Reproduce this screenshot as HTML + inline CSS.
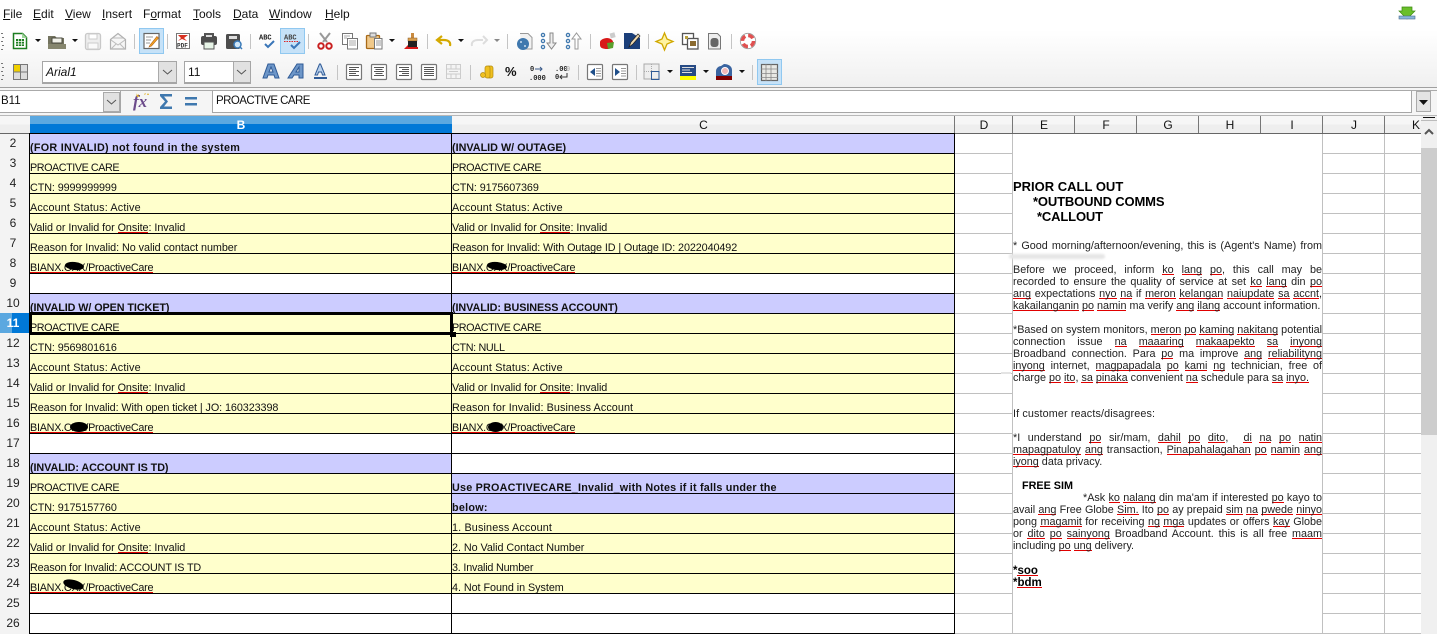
<!DOCTYPE html>
<html><head><meta charset="utf-8"><style>
html,body{margin:0;padding:0;width:1437px;height:634px;overflow:hidden;background:#fff;font-family:"Liberation Sans",sans-serif;color:#000}
.a{position:absolute}
#tb{left:0;top:0;width:1437px;height:87px;background:linear-gradient(#fff 0,#fff 30px,#f0f0f0 87px)}
.m{position:absolute;top:7px;font-size:12px;line-height:15px;color:#111}
.m u{text-underline-offset:1px}
.cb{position:absolute;background:#fff;border:1px solid #a6a6a6;box-sizing:border-box;font-size:12px;color:#111}
.h{position:absolute;top:116px;height:17px;line-height:18px;text-align:center;font-size:12px;border-right:1px solid #777;box-sizing:border-box;color:#111;padding-left:1px}
.r{position:absolute;left:0;width:26px;height:20px;line-height:19px;text-align:center;font-size:12px;color:#222}
table{position:absolute;left:29px;top:133px;border-collapse:collapse;table-layout:fixed;width:925px}
td{height:20px;padding:10px 0 0 0;border:1px solid #000;font-size:10.8px;line-height:9px;vertical-align:top;white-space:nowrap;color:#111;box-sizing:border-box;letter-spacing:-.05px}
tr{height:20px}
.l{background:#ccf;font-weight:bold}
.y{background:#ffc}
.w{background:#fff}
.s,.t u{text-decoration:none;background:linear-gradient(#e00000,#e00000) no-repeat 0 calc(100% - 1px)/100% 1px}
.t{position:absolute;left:1013px;width:309px;font-size:10.8px;line-height:12px;color:#222;white-space:normal;text-align:justify;text-align-last:justify}
.n{text-align-last:left}
.b{font-weight:bold;font-size:13px;line-height:15px;color:#000;text-align-last:left;white-space:pre}
.blob{position:absolute;background:#000;border-radius:50%}
</style></head><body>
<div class="a" id="tb"></div>
<span class="m" style="left:3px"><u>F</u>ile</span>
<span class="m" style="left:33px"><u>E</u>dit</span>
<span class="m" style="left:65px"><u>V</u>iew</span>
<span class="m" style="left:102px"><u>I</u>nsert</span>
<span class="m" style="left:143px">F<u>o</u>rmat</span>
<span class="m" style="left:193px"><u>T</u>ools</span>
<span class="m" style="left:233px"><u>D</u>ata</span>
<span class="m" style="left:269px"><u>W</u>indow</span>
<span class="m" style="left:325px"><u>H</u>elp</span>

<svg class="a" style="left:0;top:0" width="1437" height="87" viewBox="0 0 1437 87">
<rect x="139.500" y="28.500" width="24" height="25" fill="#c6e2f8" stroke="#90c8f0"/>
<rect x="280.500" y="28.500" width="24" height="25" fill="#c6e2f8" stroke="#90c8f0"/>
<rect x="757.500" y="59.500" width="24" height="25" fill="#c6e2f8" stroke="#90c8f0"/>
<g fill="#777"><rect x="1" y="33" width="2" height="1"/><rect x="2" y="37" width="2" height="1"/><rect x="1" y="41" width="2" height="1"/><rect x="2" y="45" width="2" height="1"/><rect x="1" y="49" width="2" height="1"/><rect x="1" y="63" width="2" height="1"/><rect x="2" y="67" width="2" height="1"/><rect x="1" y="71" width="2" height="1"/><rect x="2" y="75" width="2" height="1"/><rect x="1" y="79" width="2" height="1"/></g>
<g fill="#c4c4c4"><rect x="134" y="34" width="1" height="15"/><rect x="167" y="34" width="1" height="15"/><rect x="250" y="34" width="1" height="15"/><rect x="308" y="34" width="1" height="15"/><rect x="427" y="34" width="1" height="15"/><rect x="507" y="34" width="1" height="15"/><rect x="590" y="34" width="1" height="15"/><rect x="648" y="34" width="1" height="15"/><rect x="731" y="34" width="1" height="15"/>
<rect x="337" y="65" width="1" height="15"/><rect x="470" y="65" width="1" height="15"/><rect x="578" y="65" width="1" height="15"/><rect x="636" y="65" width="1" height="15"/><rect x="752" y="65" width="1" height="15"/></g>
<g fill="#111"><path d="M35 39h6l-3 3zM72 39h6l-3 3zM389 39h6l-3 3zM458 39h6l-3 3zM667 70h6l-3 3zM703 70h6l-3 3zM739 70h6l-3 3z"/></g>
<path d="M494 39h6l-3 3z" fill="#888"/>
<path d="M13.500 33.500h9l4 4v11h-13z" fill="#fff" stroke="#1c7d20" stroke-width="1.500"/><path d="M22 33l5 5h-5z" fill="#9ed49a"/><path d="M16 39h8v7h-8z" fill="#1c7d20"/><path d="M18.500 39v7M21.500 39v7M16 41.500h8M16 44h8" stroke="#fff" stroke-width=".7"/>
<path d="M48 36h7l2 2h7v11H48z" fill="#73735f"/><path d="M52 38h10v5H52z" fill="#f2f2ea" stroke="#4a4a3e"/><path d="M48 44h18v5H48z" fill="#86866e"/>
<rect x="85.500" y="33.500" width="15" height="16" rx="2" fill="#eee" stroke="#c8c8c8" stroke-width="1.300"/><rect x="89" y="34" width="8" height="5" fill="#fff" stroke="#ccc"/><rect x="88" y="43" width="10" height="6" fill="#fafafa" stroke="#ccc"/>
<path d="M110.500 39.500l7.500-6 7.500 6v9.500h-15z" fill="#f6f6f6" stroke="#b0b0b0" stroke-width="1.200"/><path d="M111 40l7 5 7-5M111 49l5-5M125 49l-5-5M113 38h10" fill="none" stroke="#bcbcbc"/>
<rect x="144" y="33.500" width="15" height="15" fill="#fff" stroke="#666" stroke-width="1.200"/><path d="M146 37h7M146 40h5M146 43h4" stroke="#999"/><path d="M150 45l-1 2 2.500-1 7-8-1.600-1.500z" fill="#f5a623" stroke="#b5651d" stroke-width=".6"/>
<rect x="176.500" y="33.500" width="13" height="15" fill="#fff" stroke="#777"/><path d="M178 35h10l-4 3 3 3-5-2-4 2 3-3z" fill="#d83020"/><text x="177" y="47.500" font-size="6" font-weight="bold" font-family="Liberation Mono" fill="#333">PDF</text>
<rect x="204" y="33" width="10" height="4" fill="#555"/><rect x="201" y="36" width="16" height="9" rx="2" fill="#4d4d4d"/><rect x="204" y="42" width="10" height="7" fill="#e8f5e8" stroke="#555"/><rect x="206" y="35" width="6" height="2" fill="#ddd"/>
<rect x="226" y="34" width="14" height="15" rx="1.500" fill="#4d4d4d"/><rect x="229" y="36" width="8" height="3" fill="#ddd"/><circle cx="237.500" cy="44.500" r="3.500" fill="#cfe6f8" stroke="#3a7ab8" stroke-width="1.500"/><path d="M240 47l2 2" stroke="#3a7ab8" stroke-width="1.500"/>
<text x="259" y="39.500" font-size="7" font-weight="bold" font-family="Liberation Mono" fill="#222">ABC</text><path d="M265 44l3 3 6-6" fill="none" stroke="#3a76b8" stroke-width="2"/>
<text x="284" y="39.500" font-size="7" font-weight="bold" font-family="Liberation Mono" fill="#444">ABC</text><path d="M284 41.500h14" stroke="#e02020" stroke-dasharray="1.500 1"/><path d="M291 45l3 3 6-6" fill="none" stroke="#3a76b8" stroke-width="2"/>
<path d="M320 33l7 9M330 33l-7 9" stroke="#999" stroke-width="2"/><circle cx="321" cy="46" r="2.700" fill="#fff" stroke="#c81e1e" stroke-width="2"/><circle cx="329" cy="46" r="2.700" fill="#fff" stroke="#c81e1e" stroke-width="2"/>
<rect x="342.500" y="33.500" width="10" height="11" fill="#fff" stroke="#777"/><rect x="347.500" y="38.500" width="10" height="10.500" fill="#fff" stroke="#777"/><path d="M344 36h6M344 38h3M349 41h7M349 43h7M349 45h7" stroke="#aaa"/>
<rect x="366.500" y="35.500" width="13" height="13" rx="1" fill="#f0c98a" stroke="#a86a18" stroke-width="1.300"/><rect x="370" y="33" width="6" height="4" fill="#ddd" stroke="#777"/><rect x="374.500" y="38.500" width="7.500" height="10.500" fill="#fff" stroke="#777"/><path d="M376 41h5M376 43h5M376 45h5" stroke="#999"/>
<rect x="411" y="33" width="3" height="5" fill="#c88a40"/><rect x="408" y="38" width="9" height="3" fill="#d9a050" stroke="#8a5a20" stroke-width=".5"/><rect x="408" y="41" width="9" height="7" fill="#222"/><path d="M404 49l4-4v4z" fill="#d81818"/><rect x="407" y="47" width="11" height="2" fill="#d81818"/>
<path d="M450 46c1-4-2-6-6-6h-5m3-4l-5 4 5 4" fill="none" stroke="#d4a900" stroke-width="2.200"/>
<path d="M472 46c-1-4 2-6 6-6h5" fill="none" stroke="#ddd" stroke-width="2"/><path d="M483 36l4 4-4 4" fill="none" stroke="#ddd" stroke-width="2"/>
<path d="M520 33.500h8l4 4v11.500h-10" fill="#f2f2f2" stroke="#999"/><circle cx="523" cy="44" r="6" fill="#3f78ae"/><circle cx="521" cy="42" r="1" fill="#cde"/><circle cx="525" cy="46" r="1" fill="#cde"/>
<g fill="none" stroke="#3f78ae" stroke-width="1.300"><circle cx="543" cy="35" r="1.600"/><circle cx="543" cy="41" r="1.600"/><circle cx="543" cy="47" r="1.600"/><circle cx="568" cy="35" r="1.600"/><circle cx="568" cy="41" r="1.600"/><circle cx="568" cy="47" r="1.600"/></g>
<path d="M550 33v10h-3l4.500 6 4.500-6h-3V33z" fill="#eee" stroke="#888"/><path d="M575 49V39h-3l4.500-6 4.500 6h-3v10z" fill="#fff" stroke="#999"/>
<path d="M600 42c0-2 4-4 7-4 3 0 6 2 6 4v3c0 3-3 4-6 4-4 0-7-1-7-4z" fill="#d81818"/><path d="M607 43l7-1-1 6-5 1z" fill="#5aa02c"/><rect x="610" y="33" width="5" height="5" fill="#ccc" transform="rotate(-15 612 35)"/>
<rect x="624" y="33" width="16" height="16" fill="#1b3f7a"/><path d="M632 33h8v5z" fill="#f2f2f2"/><path d="M629 47l2-5 7-8 2 2-7 8z" fill="#eed9b0" stroke="#222" stroke-width=".7"/>
<path d="M664.500 33l2.500 6 6 2.500-6 2.500-2.500 6-2.500-6-6-2.500 6-2.500z" fill="#fff3a0" stroke="#d0a800" stroke-width="1.300"/>
<rect x="682.500" y="33.500" width="11" height="11" fill="#fff" stroke="#555" stroke-width="1.300"/><rect x="687.500" y="38.500" width="10.500" height="10.500" fill="#fff" stroke="#555" stroke-width="1.300"/><rect x="690" y="41" width="6" height="5" fill="#8a6a30"/><rect x="685" y="36" width="3" height="3" fill="#b8a040"/>
<path d="M708.500 33.500h9l3 3v12.500h-12z" fill="#eee" stroke="#777"/><rect x="710.500" y="38" width="8" height="9" rx="3" fill="#666"/>
<circle cx="748" cy="41" r="7.700" fill="#fff" stroke="#999" stroke-width=".8"/><circle cx="748" cy="41" r="5.500" fill="none" stroke="#e05050" stroke-width="3.500" stroke-dasharray="5.640 3"/><circle cx="748" cy="41" r="3" fill="#fff"/>
<rect x="13.500" y="64.500" width="14" height="15" fill="#ddd" stroke="#777"/><rect x="14" y="65" width="7" height="7" fill="#f0d000"/><path d="M20.500 64v15M13 72h15" stroke="#777"/>
<g fill="#6d96c8" stroke="#2f5a96" stroke-width="1"><path fill-rule="evenodd" d="M268 64h6l5 14h-4l-1-3h-6l-1 3h-4zM271 67l-2 5h4z"/><path fill-rule="evenodd" d="M297 64h6v14h-4v-3h-5l-2 3h-4zM299 67l-3 5h3z"/></g>
<path d="M320.500 64l4.500 11h-2.500l-1-3h-3l-1 3h-2.500l4.500-11z" fill="#b8d0ec" stroke="#2f5a96"/><rect x="314" y="77" width="13" height="2" fill="#2f5a96"/>
<g fill="#fff" stroke="#777" stroke-width="1.200"><rect x="346.500" y="64.500" width="15" height="15" rx="1"/><rect x="371.500" y="64.500" width="15" height="15" rx="1"/><rect x="396.500" y="64.500" width="15" height="15" rx="1"/><rect x="421.500" y="64.500" width="15" height="15" rx="1"/></g>
<g stroke="#555"><path d="M349 67.500h10M349 69.500h7M349 71.500h10M349 73.500h7M349 75.500h10M374 67.500h10M375.500 69.500h7M374 71.500h10M375.500 73.500h7M374 75.500h10M399 67.500h10M402 69.500h7M399 71.500h10M402 73.500h7M399 75.500h10M424 67.500h10M424 69.500h10M424 71.500h10M424 73.500h10M424 75.500h10"/></g>
<rect x="446.500" y="64.500" width="14" height="14" fill="#f4f4f4" stroke="#ccc"/><path d="M446 69h15M446 74h15M451 64v5M456 64v5M451 74v5M456 74v5M449 71.500h9" stroke="#ccc"/>
<g fill="#f0c020" stroke="#b08a10" stroke-width=".7"><rect x="487" y="66" width="6" height="12" rx="2"/><rect x="485" y="66" width="5" height="12" rx="2"/><circle cx="483" cy="75" r="2.500"/></g>
<text x="505" y="76" font-size="13" font-weight="bold" fill="#111">%</text>
<g font-family="Liberation Mono" font-weight="bold" font-size="7" fill="#222"><text x="530" y="71">0</text><text x="529" y="80">.000</text><text x="555" y="71">.00</text><text x="566" y="71" fill="#bbb">0</text><text x="555" y="79">0</text></g>
<path d="M535 69h7m-2-2l2 2-2 2" fill="none" stroke="#3a5a8a"/><path d="M567 73v4h-7m2-2l-2 2 2 2" fill="none" stroke="#333"/>
<rect x="587.500" y="64.500" width="15" height="15" rx="1" fill="#fff" stroke="#777" stroke-width="1.200"/><rect x="612.500" y="64.500" width="15" height="15" rx="1" fill="#fff" stroke="#777" stroke-width="1.200"/>
<path d="M595 68v8l-5-4z" fill="#1f4f8a"/><path d="M615 68v8l5-4z" fill="#1f4f8a"/><path d="M596 68.500h5M596 71h5M596 73.500h5M596 76h5M621 68.500h5M621 71h5M621 73.500h5M621 76h5" stroke="#777" stroke-width=".8"/>
<rect x="644" y="64" width="15" height="15" fill="#eee" stroke="#aaa"/><path d="M651.500 64v15M644 71.500h15" stroke="#aaa" stroke-dasharray="1 1"/><path d="M651.500 72v7.500M651 71.500h8v8h-8" fill="none" stroke="#2f5a96"/>
<rect x="680" y="65" width="16" height="11" fill="#274b85"/><path d="M682 67.500h12M682 70h8M682 72.500h10" stroke="#ddd"/><rect x="680" y="76" width="16" height="4" fill="#ff0"/>
<path d="M716 76v-5c0-3 3-5 5-5l3-2c4 0 8 2 8 6v6z" fill="#3a64a0"/><circle cx="725" cy="71" r="3.500" fill="#f0b8b8" stroke="#fff"/><rect x="716" y="76" width="16" height="4" fill="#800000"/>
<rect x="761.500" y="64.500" width="16" height="16" fill="#e8e8e4" stroke="#666" stroke-width="1.200"/><path d="M761 69h17M761 73.500h17M761 77.500h17M766 64v17M771 64v17" stroke="#888" stroke-width=".8"/>
<path d="M1402 7h10v4h3l-8 8-8-8h3z" fill="#6abf2a" stroke="#3d8a10" stroke-width=".7"/><rect x="1399" y="16" width="16" height="3" fill="#8ab6dc" stroke="#4a6a8a" stroke-width=".6"/>
</svg>

<div class="cb" style="left:42px;top:61px;width:135px;height:23px;line-height:21px;padding-left:3px;font-style:italic;border-width:1px 2px 2px 1px">Arial1</div>
<div class="a" style="left:158px;top:62px;width:17px;height:20px;background:#e1e1e1;border-left:1px solid #aaa"></div>
<div class="cb" style="left:184px;top:61px;width:67px;height:23px;line-height:21px;padding-left:3px;border-width:1px 2px 2px 1px">11</div>
<div class="a" style="left:233px;top:62px;width:16px;height:20px;background:#e1e1e1;border-left:1px solid #aaa"></div>
<svg class="a" style="left:0;top:60px" width="260" height="25"><path d="M163 10l4.500 4 4.500-4M237 10l4.500 4 4.500-4" fill="none" stroke="#555"/></svg>

<div class="a" style="left:0;top:87px;width:1437px;height:28px;background:#f5f5f5"></div>
<div class="a" style="left:0;top:87px;width:1437px;height:1px;background:#a0a0a0"></div>
<div class="a" style="left:0;top:90px;width:1437px;height:1px;background:#aaa"></div>
<div class="cb" style="left:-1px;top:91px;width:122px;height:22px;line-height:20px;padding-left:1px;border-top:0;font-size:11.500px">B11</div>
<div class="a" style="left:103px;top:92px;width:17px;height:20px;background:#e1e1e1;border:1px solid #aaa;box-sizing:border-box"></div>
<svg class="a" style="left:100px;top:92px" width="24" height="20"><path d="M7 8l4.500 4 4.500-4" fill="none" stroke="#555"/></svg>
<svg class="a" style="left:125px;top:88px" width="80" height="26" viewBox="125 88 80 26">
<text x="133" y="107" font-size="17" font-weight="bold" font-style="italic" font-family="Liberation Serif" fill="#6b4a8a">fx</text><path d="M136 93l1 2 2-1-1 2 2 1-3 0zM143 93l1 1 2-1-1 2zM148 93l-1 2 2 0z" fill="#e0b020"/>
<path d="M160 94h12v2.500h-8l4 5-4 5h8v2.500h-12v-2l5-5.500-5-5.500z" fill="#3f78ae"/>
<rect x="185" y="97" width="12" height="2.500" fill="#3f78ae"/><rect x="185" y="103" width="12" height="2.500" fill="#3f78ae"/>
</svg>
<div class="cb" style="left:212px;top:91px;width:1200px;height:22px;line-height:20px;padding-left:3px;border-top:0;font-size:11.500px;letter-spacing:-.55px">PROACTIVE CARE</div>
<div class="a" style="left:1416px;top:91px;width:15px;height:21px;background:#e4e4e4;border:1px solid #aaa;box-sizing:border-box"></div>
<svg class="a" style="left:1416px;top:91px" width="15" height="21"><path d="M3 9h9l-4.500 5z" fill="#111"/></svg>

<div class="a" style="left:0;top:115px;width:1437px;height:1px;background:#b8b8b8"></div>
<div class="a" style="left:0;top:116px;width:1437px;height:17px;background:linear-gradient(#f6f6f6 0,#f6f6f6 8px,#eee 9px)"></div>
<div class="a" style="left:0;top:133px;width:1421px;height:1px;background:#666"></div>
<div class="a" style="left:0;top:134px;width:29px;height:500px;background:#f3f3f3;border-right:1px solid #888"></div>
<div class="a" style="left:0;top:313px;width:12px;height:20px;background:#5ba8e0"></div>
<div class="a" style="left:12px;top:313px;width:18px;height:20px;background:#0078d7"></div>

<div class="a" style="left:30px;top:116px;width:422px;height:8px;background:#5ba8e0"></div>
<div class="a" style="left:30px;top:124px;width:422px;height:10px;background:#0078d7"></div>
<div class="a" style="left:30px;top:116px;width:422px;height:17px;line-height:18px;text-align:center;color:#fff;font-weight:bold;font-size:12px">B</div>
<div class="h" style="left:452px;width:503px">C</div>
<div class="h" style="left:955px;width:58px">D</div>
<div class="h" style="left:1013px;width:62px">E</div>
<div class="h" style="left:1075px;width:62px">F</div>
<div class="h" style="left:1137px;width:62px">G</div>
<div class="h" style="left:1199px;width:62px">H</div>
<div class="h" style="left:1261px;width:62px">I</div>
<div class="h" style="left:1323px;width:62px">J</div>
<div class="h" style="left:1385px;width:36px;text-align:left;padding-left:27px;border-right:0">K</div>

<div class="r" style="top:134px">2</div><div class="r" style="top:154px">3</div><div class="r" style="top:174px">4</div><div class="r" style="top:194px">5</div><div class="r" style="top:214px">6</div><div class="r" style="top:234px">7</div><div class="r" style="top:254px">8</div><div class="r" style="top:274px">9</div><div class="r" style="top:294px">10</div>
<div class="r" style="top:314px;color:#fff;font-weight:bold">11</div>
<div class="r" style="top:334px">12</div><div class="r" style="top:354px">13</div><div class="r" style="top:374px">14</div><div class="r" style="top:394px">15</div><div class="r" style="top:414px">16</div><div class="r" style="top:434px">17</div><div class="r" style="top:454px">18</div><div class="r" style="top:474px">19</div><div class="r" style="top:494px">20</div><div class="r" style="top:514px">21</div><div class="r" style="top:534px">22</div><div class="r" style="top:554px">23</div><div class="r" style="top:574px">24</div><div class="r" style="top:594px">25</div><div class="r" style="top:614px">26</div>

<div class="a" style="left:955px;top:134px;width:466px;height:500px;background:repeating-linear-gradient(#fff 0,#fff 19px,#c0c0c0 19px,#c0c0c0 20px)"></div>
<div class="a" style="left:1012px;top:134px;width:1px;height:500px;background:#c0c0c0"></div>
<div class="a" style="left:1322px;top:134px;width:1px;height:500px;background:#c0c0c0"></div>
<div class="a" style="left:1384px;top:134px;width:1px;height:500px;background:#c0c0c0"></div>
<div class="a" style="left:1013px;top:134px;width:309px;height:499px;background:#fff"></div>
<div class="a" style="left:1013px;top:633px;width:408px;height:1px;background:#c0c0c0"></div>

<table>
<colgroup><col style="width:422px"><col style="width:503px"></colgroup>
<tr><td class="l" style="letter-spacing:.27px">(FOR INVALID) not found in the system</td><td class="l" style="letter-spacing:0">(INVALID W/ OUTAGE)</td></tr>
<tr><td class="y" style="letter-spacing:-.45px">PROACTIVE CARE</td><td class="y" style="letter-spacing:-.45px">PROACTIVE CARE</td></tr>
<tr><td class="y" style="letter-spacing:-.1px">CTN: 9999999999</td><td class="y" style="letter-spacing:-.1px">CTN: 9175607369</td></tr>
<tr><td class="y" style="letter-spacing:.15px">Account Status: Active</td><td class="y" style="letter-spacing:.15px">Account Status: Active</td></tr>
<tr><td class="y">Valid or Invalid for <span class="s">Onsite</span>: Invalid</td><td class="y">Valid or Invalid for <span class="s">Onsite</span>: Invalid</td></tr>
<tr><td class="y">Reason for Invalid: No valid contact number</td><td class="y" style="letter-spacing:-.1px">Reason for Invalid: With Outage ID | Outage ID: 2022040492</td></tr>
<tr><td class="y" style="letter-spacing:-.25px"><span class="s">BIANX.CXX/ProactiveCare</span></td><td class="y" style="letter-spacing:-.25px"><span class="s">BIANX.CXX/ProactiveCare</span></td></tr>
<tr><td class="w"></td><td class="w"></td></tr>
<tr><td class="l" style="letter-spacing:-.08px">(INVALID W/ OPEN TICKET)</td><td class="l" style="letter-spacing:-.08px">(INVALID: BUSINESS ACCOUNT)</td></tr>
<tr><td class="y" style="letter-spacing:-.45px">PROACTIVE CARE</td><td class="y" style="letter-spacing:-.45px">PROACTIVE CARE</td></tr>
<tr><td class="y" style="letter-spacing:-.1px">CTN: 9569801616</td><td class="y" style="letter-spacing:-.35px">CTN: NULL</td></tr>
<tr><td class="y" style="letter-spacing:.15px">Account Status: Active</td><td class="y" style="letter-spacing:.15px">Account Status: Active</td></tr>
<tr><td class="y">Valid or Invalid for <span class="s">Onsite</span>: Invalid</td><td class="y">Valid or Invalid for <span class="s">Onsite</span>: Invalid</td></tr>
<tr><td class="y" style="letter-spacing:-.08px">Reason for Invalid: With open ticket | JO: 160323398</td><td class="y" style="letter-spacing:.08px">Reason for Invalid: Business Account</td></tr>
<tr><td class="y" style="letter-spacing:-.25px"><span class="s">BIANX.CXX/ProactiveCare</span></td><td class="y" style="letter-spacing:-.25px"><span class="s">BIANX.CXX/ProactiveCare</span></td></tr>
<tr><td class="w"></td><td class="w"></td></tr>
<tr><td class="l" style="letter-spacing:-.08px">(INVALID: ACCOUNT IS TD)</td><td class="w"></td></tr>
<tr><td class="y" style="letter-spacing:-.45px">PROACTIVE CARE</td><td class="l" style="letter-spacing:.2px">Use PROACTIVECARE_Invalid_with Notes if it falls under the</td></tr>
<tr><td class="y" style="letter-spacing:-.1px">CTN: 9175157760</td><td class="l" style="letter-spacing:.25px">below:</td></tr>
<tr><td class="y" style="letter-spacing:.15px">Account Status: Active</td><td class="y" style="letter-spacing:.15px">1. Business Account</td></tr>
<tr><td class="y">Valid or Invalid for <span class="s">Onsite</span>: Invalid</td><td class="y">2. No Valid Contact Number</td></tr>
<tr><td class="y" style="letter-spacing:-.15px">Reason for Invalid: ACCOUNT IS TD</td><td class="y" style="letter-spacing:-.2px">3. Invalid Number</td></tr>
<tr><td class="y" style="letter-spacing:-.25px"><span class="s">BIANX.CXX/ProactiveCare</span></td><td class="y">4. Not Found in System</td></tr>
<tr><td class="w"></td><td class="w"></td></tr>
<tr><td class="w"></td><td class="w"></td></tr>
</table>

<div class="a" style="left:29px;top:312px;width:418px;height:17px;border:3px solid #000;pointer-events:none"></div>
<div class="a" style="left:450px;top:332px;width:6px;height:5px;background:#000"></div>

<div class="blob" style="left:65px;top:262px;width:19px;height:8px;transform:rotate(6deg)"></div>
<div class="blob" style="left:487px;top:262px;width:20px;height:8px;transform:rotate(6deg)"></div>
<div class="blob" style="left:70px;top:422px;width:18px;height:10px"></div>
<div class="blob" style="left:488px;top:422px;width:15px;height:10px"></div>
<div class="blob" style="left:63px;top:580px;width:21px;height:9px;transform:rotate(15deg)"></div>

<div class="t b" style="top:179px">PRIOR CALL OUT</div>
<div class="t b" style="top:194px;left:1033px;width:280px;letter-spacing:-.15px">*OUTBOUND COMMS</div>
<div class="t b" style="top:209px;left:1037px;width:280px;letter-spacing:-.15px">*CALLOUT</div>
<div class="t" style="top:240px">* Good morning/afternoon/evening, this is (Agent's Name) from</div>
<div class="a" style="left:1009px;top:254px;width:96px;height:5px;background:#e6e6e6;border-radius:4px;filter:blur(1px)"></div>
<div class="a" style="left:1001px;top:372px;width:10px;height:2px;background:#e4e4e4"></div>
<div class="t" style="top:264px">Before we proceed, inform <u>ko</u> <u>lang</u> <u>po</u>, this call may be</div>
<div class="t" style="top:276px">recorded to ensure the quality of service at set <u>ko</u> <u>lang</u> din <u>po</u></div>
<div class="t" style="top:288px"><u>ang</u> expectations <u>nyo</u> <u>na</u> if <u>meron</u> <u>kelangan</u> <u>naiupdate</u> <u>sa</u> <u>accnt</u>,</div>
<div class="t n" style="top:300px"><u>kakailanganin</u> <u>po</u> <u>namin</u> ma verify <u>ang</u> <u>ilang</u> account information.</div>
<div class="t" style="top:324px">*Based on system monitors, <u>meron</u> <u>po</u> <u>kaming</u> <u>nakitang</u> potential</div>
<div class="t" style="top:336px">connection issue <u>na</u> <u>maaaring</u> <u>makaapekto</u> <u>sa</u> <u>inyong</u></div>
<div class="t" style="top:348px">Broadband connection. Para <u>po</u> ma improve <u>ang</u> <u>reliabilityng</u></div>
<div class="t" style="top:360px"><u>inyong</u> internet, <u>magpapadala</u> <u>po</u> <u>kami</u> <u>ng</u> technician, free of</div>
<div class="t n" style="top:372px">charge <u>po</u> <u>ito</u>, <u>sa</u> <u>pinaka</u> convenient <u>na</u> schedule para <u>sa</u> <u>inyo.</u></div>
<div class="t n" style="top:408px;letter-spacing:.12px">If customer reacts/disagrees:</div>
<div class="t" style="top:432px">*I understand <u>po</u> sir/mam, <u>dahil</u> <u>po</u> <u>dito</u>, &nbsp;<u>di</u> <u>na</u> <u>po</u> <u>natin</u></div>
<div class="t" style="top:444px"><u>mapagpatuloy</u> <u>ang</u> transaction, <u>Pinapahalagahan</u> <u>po</u> <u>namin</u> <u>ang</u></div>
<div class="t n" style="top:456px"><u>iyong</u> data privacy.</div>
<div class="t n" style="top:480px;left:1022px;width:100px;font-weight:bold;color:#000">FREE SIM</div>
<div class="t" style="top:492px;left:1083px;width:239px">*Ask <u>ko</u> <u>nalang</u> din ma'am if interested <u>po</u> kayo to</div>
<div class="t" style="top:504px">avail <u>ang</u> Free Globe <u>Sim.</u> Ito <u>po</u> ay prepaid <u>sim</u> <u>na</u> <u>pwede</u> <u>ninyo</u></div>
<div class="t" style="top:516px">pong <u>magamit</u> for receiving <u>ng</u> <u>mga</u> updates or offers <u>kay</u> Globe</div>
<div class="t" style="top:528px">or <u>dito</u> <u>po</u> <u>sainyong</u> Broadband Account. this is all free <u>maam</u></div>
<div class="t n" style="top:540px">including <u>po</u> <u>ung</u> delivery.</div>
<div class="t n" style="top:565px;font-weight:bold;font-size:11.500px;color:#000">*<u>soo</u></div>
<div class="t n" style="top:577px;font-weight:bold;font-size:11.500px;color:#000">*<u>bdm</u></div>

<div class="a" style="left:1421px;top:116px;width:16px;height:518px;background:#f0f0f0"></div>
<div class="a" style="left:1423px;top:117px;width:12px;height:1px;background:#111"></div>
<div class="a" style="left:1421px;top:120px;width:16px;height:1px;background:#bbb"></div>
<div class="a" style="left:1421px;top:148px;width:16px;height:287px;background:#cdcdcd"></div>
<svg class="a" style="left:1421px;top:122px" width="16" height="20"><path d="M4 12l4-4 4 4" fill="none" stroke="#555" stroke-width="2"/></svg>
</body></html>
